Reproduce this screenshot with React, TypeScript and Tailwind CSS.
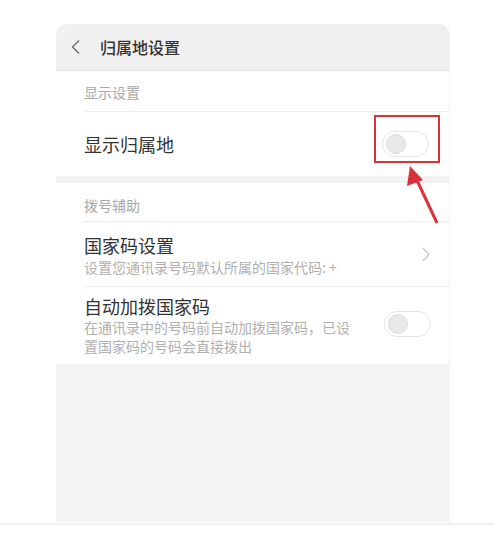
const font = { fontFamily: '"Noto Sans CJK SC", "Noto Sans", sans-serif' };

const Toggle = () => (
  <div className="flex h-[26px] w-[47px] items-center rounded-full border border-[#e4e4e4] bg-white px-[3px]">
    <div className="h-[20px] w-[20px] rounded-full border border-[#dcdcdc] bg-[#e8e8e8]" />
  </div>
);

const SectionLabel = ({ text, className }: { text: string; className: string }) => (
  <div className={`flex items-center border-b border-[#ececec] ml-[28px] text-[14px] text-[#a8a8a8] ${className}`}>
    {text}
  </div>
);

export default function App() {
  return (
    <div className="relative min-h-[544px] w-[494px] bg-white" style={font}>
      <div className="pt-[24px] pl-[56px]">
        <div className="w-[394px] border-r border-[#f2f2f2]">
          {/* header */}
          <div className="flex h-[47px] items-center rounded-t-[10px] border-b border-[#e2e2e2] bg-[#f0f0f0] pl-[14px]">
            <svg width="12" height="16" viewBox="0 0 12 16" className="mr-[18px]">
              <path d="M9 1.5 L2.5 8 L9 14.5" fill="none" stroke="#6a6a6a" strokeWidth="1.4" />
            </svg>
            <span className="text-[16px] font-medium text-[#333]">归属地设置</span>
          </div>

          <SectionLabel text="显示设置" className="h-[41px] pt-[2px]" />

          <div className="flex h-[64px] items-center justify-between pl-[28px] pr-[20px]">
            <span className="text-[18px] text-[#333]">显示归属地</span>
            <Toggle />
          </div>

          <div className="h-[7px] bg-[#f2f2f2]" />

          <SectionLabel text="拨号辅助" className="h-[39px] pt-[6px]" />

          <div className="flex h-[65px] items-center justify-between border-b border-[#ececec] ml-[28px] pr-[19px]">
            <div className="flex flex-col pt-[1px]">
              <span className="text-[18px] leading-[24px] text-[#333]">国家码设置</span>
              <span className="text-[14px] leading-[20px] text-[#b0b0b0]">设置您通讯录号码默认所属的国家代码: +</span>
            </div>
            <svg width="8" height="15" viewBox="0 0 8 15">
              <path d="M1 1 L7 7.5 L1 14" fill="none" stroke="#c4c4c4" strokeWidth="1.2" />
            </svg>
          </div>

          <div className="flex h-[77px] items-start justify-between pl-[28px] pr-[18px] pt-[7px]">
            <div className="flex w-[272px] flex-col">
              <span className="text-[18px] leading-[24px] text-[#333]">自动加拨国家码</span>
              <span className="text-[14px] leading-[19px] text-[#b0b0b0]">
                在通讯录中的号码前自动加拨国家码，已设置国家码的号码会直接拨出
              </span>
            </div>
            <div className="pt-[17px]">
              <Toggle />
            </div>
          </div>

          <div className="h-[158px] bg-[#f5f5f5]" />
        </div>
      </div>
      <div className="mt-[1px] h-[2px] w-full bg-[#f0f0f0]" />

      {/* annotation */}
      <div className="absolute left-[374px] top-[115px] h-[48px] w-[66px] border-2 border-[#d8323a]" />
      <svg className="absolute left-[400px] top-[160px]" width="45" height="70" viewBox="0 0 45 70">
        <path d="M37 63 L15 16" stroke="#d8323a" strokeWidth="3" fill="none" />
        <path d="M10 6 L23 20 L7 26 Z" fill="#d8323a" />
      </svg>
    </div>
  );
}
